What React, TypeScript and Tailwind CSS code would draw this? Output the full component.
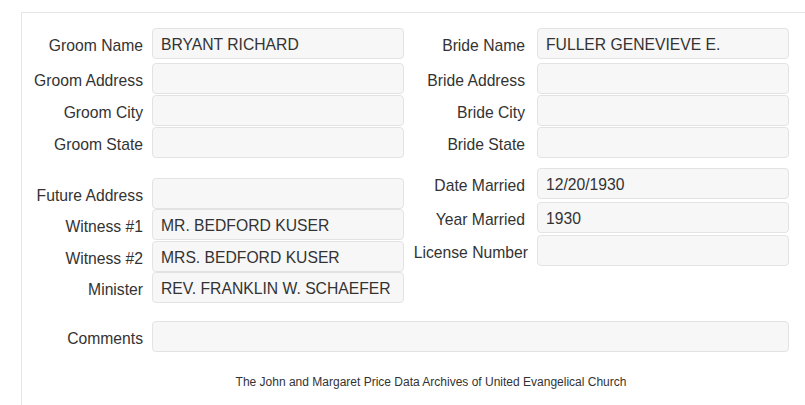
const font = { fontFamily: '"Liberation Sans", Arial, sans-serif' };

function Field({
  label,
  value,
  gap,
  className = '',
  labelClass = '',
}: {
  label: string;
  value?: string;
  gap: 'left' | 'right';
  className?: string;
  labelClass?: string;
}) {
  return (
    <div className={`flex items-center ${className}`}>
      <label
        className={`w-[121px] shrink-0 text-right text-[15.7px] text-[#333] leading-none pt-[4px] whitespace-nowrap ${labelClass}`}
      >
        {label}
      </label>
      <div
        className={`${gap === 'left' ? 'ml-[9px]' : 'ml-[12px]'} w-[252px] h-[31px] shrink-0 rounded-[4px] border border-[#e3e3e3] bg-[#f7f7f7] px-[8px] pt-[2px] flex items-center text-[15.7px] text-[#333] leading-none whitespace-nowrap`}
      >
        {value}
      </div>
    </div>
  );
}

export default function App() {
  return (
    <div className="w-full h-[405px] bg-white overflow-hidden" style={font}>
      <div className="ml-[21px] mt-[12px] h-[393px] border-l border-t border-[#e5e5e5]">
        <div className="pt-[15px] flex">
          {/* left column */}
          <div className="w-[382px] shrink-0">
            <Field gap="left" label="Groom Name" value="BRYANT RICHARD" />
            <Field gap="left" label="Groom Address" className="mt-[4px]" />
            <Field gap="left" label="Groom City" className="mt-[1px]" />
            <Field gap="left" label="Groom State" className="mt-[1px]" />

            <Field gap="left" label="Future Address" className="mt-[20px]" />
            <Field gap="left" label="Witness #1" value="MR. BEDFORD KUSER" />
            <Field gap="left" label="Witness #2" value="MRS. BEDFORD KUSER" className="mt-[1px]" />
            <Field gap="left" label="Minister" value="REV. FRANKLIN W. SCHAEFER" />
          </div>

          {/* right column */}
          <div className="w-[385px] shrink-0">
            <Field gap="right" label="Bride Name" value="FULLER GENEVIEVE E." />
            <Field gap="right" label="Bride Address" className="mt-[4px]" />
            <Field gap="right" label="Bride City" className="mt-[1px]" />
            <Field gap="right" label="Bride State" className="mt-[1px]" />

            <Field gap="right" label="Date Married" value="12/20/1930" className="mt-[10px]" />
            <Field gap="right" label="Year Married" value="1930" className="mt-[3px]" />
            <Field
              gap="right"
              label="License Number"
              className="mt-[2px]"
              labelClass="translate-x-[3px]"
            />
          </div>
        </div>

        <div className="mt-[18px] flex items-center">
          <label className="w-[121px] shrink-0 text-right text-[15.7px] text-[#333] leading-none pt-[4px]">
            Comments
          </label>
          <div className="ml-[9px] w-[637px] h-[31px] rounded-[4px] border border-[#e3e3e3] bg-[#f7f7f7]" />
        </div>

        <div className="mt-[21px] w-[818px] text-center text-[12px] text-[#333]">
          The John and Margaret Price Data Archives of United Evangelical Church
        </div>
      </div>
    </div>
  );
}
